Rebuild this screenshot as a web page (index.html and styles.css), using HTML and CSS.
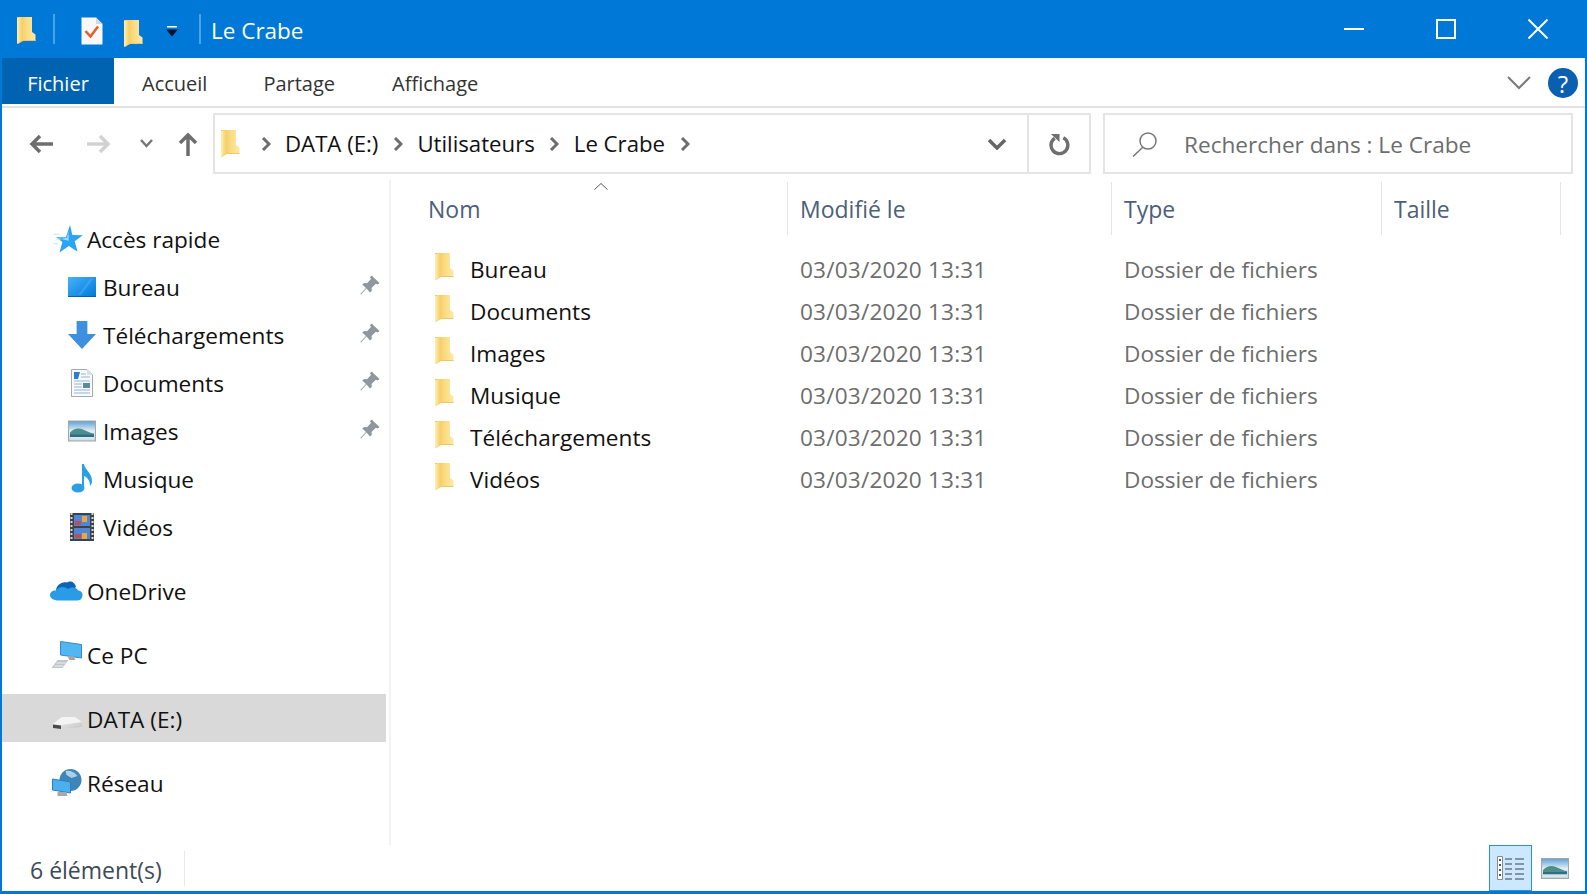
FILE: index.html
```html
<!DOCTYPE html>
<html lang="fr">

<head>
    <meta charset="UTF-8">
    <meta name="viewport" content="width=device-width, initial-scale=1.0">
    <title>Le Crabe</title>
    <link rel="stylesheet" href="styles.css">
</head>

<body>
    <svg class="defs" width="0" height="0">
        <defs>
            <linearGradient id="folderBack" x1="0" y1="0" x2="1" y2="0">
                <stop offset="0" stop-color="#f2c14e" />
                <stop offset="0.55" stop-color="#fbdc84" />
                <stop offset="1" stop-color="#fde9a6" />
            </linearGradient>
            <linearGradient id="folderFront" x1="0" y1="0" x2="1" y2="0">
                <stop offset="0" stop-color="#fff0b8" />
                <stop offset="1" stop-color="#f5cf6b" />
            </linearGradient>
            <linearGradient id="screenBlue" x1="0" y1="0" x2="1" y2="1">
                <stop offset="0" stop-color="#45b3fb" />
                <stop offset="1" stop-color="#0078d7" />
            </linearGradient>
            <linearGradient id="photoSky" x1="0" y1="0" x2="0" y2="1">
                <stop offset="0" stop-color="#5f9fd4" />
                <stop offset="0.5" stop-color="#dfeef6" />
                <stop offset="1" stop-color="#bcd7e2" />
            </linearGradient>
            <linearGradient id="driveTop" x1="0" y1="0" x2="1" y2="1">
                <stop offset="0" stop-color="#fafafa" />
                <stop offset="1" stop-color="#c4c4c4" />
            </linearGradient>
            <symbol id="folder" viewBox="0 0 19 27">
                <path fill="url(#folderBack)" d="M0 0H15V15L18.500 17.500V24H6L0.800 27L0 26Z" />
                <path fill="url(#folderFront)" d="M0 1L5 0V23.500L1 26.500H0Z" />
                <path fill="#f0c766" d="M6 23H18.500V24H6Z" />
            </symbol>
            <symbol id="pin" viewBox="0 0 20 20">
                <path fill="#8e979f" d="M11.500 0.500L19.500 8L17.500 9.500L15.800 8.800L11.500 13L11.800 16L10 17.500L6.500 13.500L1 19.500L0.300 19L6 13L2.300 9.500L4 8L7 8.300L11 4L10 2.300Z" />
            </symbol>
            <symbol id="photo" viewBox="0 0 28 21">
                <rect x="0.500" y="0.500" width="27" height="20" fill="url(#photoSky)" stroke="#a6a6a6" />
                <path fill="#4c8f8a" d="M2 12C6 8 10 7 15 9S23 13 26 13V15H2Z" />
                <path fill="#2f6c88" d="M2 14H26V16.500H2Z" />
                <path fill="#d6e6ee" d="M2 16.500H26V19H2Z" />
            </symbol>
        </defs>
    </svg>

    <div class="window">
        <header class="titlebar">
            <svg class="ico-folder"><use href="#folder" /></svg>
            <span class="title-sep first"></span>
            <svg class="ico-props" viewBox="0 0 22 28">
                <path fill="#f8f8f8" d="M0.500 0.500H15L21.500 7V27.500H0.500Z" />
                <path fill="#d8d8d8" d="M15 0.500V7H21.500Z" />
                <path fill="none" stroke="#e0622a" stroke-width="2.600" d="M4.500 14L9.500 19.500L17 9.500" />
            </svg>
            <svg class="ico-folder second"><use href="#folder" /></svg>
            <svg class="ico-drop" viewBox="0 0 12 11">
                <path fill="#fff" d="M1 0H11V1.500H1Z" />
                <path fill="#06122e" d="M0 3.500H12L6 10.500Z" />
            </svg>
            <span class="title-sep"></span>
            <span class="title-text">Le Crabe</span>
            <div class="win-controls">
                <svg class="win-btn" viewBox="0 0 20 20"><path d="M0 10H20" /></svg>
                <svg class="win-btn" viewBox="0 0 20 20"><path d="M1 1H19V19H1Z" /></svg>
                <svg class="win-btn" viewBox="0 0 20 20"><path d="M0.500 0.500L19.500 19.500M19.500 0.500L0.500 19.500" /></svg>
            </div>
        </header>

        <nav class="ribbon">
            <a class="tab tab-file">Fichier</a>
            <a class="tab tab-home">Accueil</a>
            <a class="tab tab-share">Partage</a>
            <a class="tab tab-view">Affichage</a>
            <svg class="ribbon-chevron" viewBox="0 0 24 14"><path d="M1 1L12 12L23 1" /></svg>
            <span class="help">?</span>
        </nav>

        <div class="toolbar">
            <div class="nav-buttons">
                <svg class="nav-arrow" viewBox="0 0 24 20"><path d="M24 10H4M11 2L3 10L11 18" /></svg>
                <svg class="nav-arrow disabled" viewBox="0 0 24 20"><path d="M0 10H20M13 2L21 10L13 18" /></svg>
                <svg class="nav-recent" viewBox="0 0 13 9"><path d="M1 1L6.500 7L12 1" /></svg>
                <svg class="nav-up" viewBox="0 0 20 24"><path d="M10 24V4M2 11L10 3L18 11" /></svg>
            </div>
            <div class="address">
                <svg class="ico-folder"><use href="#folder" /></svg>
                <svg class="crumb-arrow" viewBox="0 0 10 14"><path d="M2 1L8 7L2 13" /></svg>
                <span class="crumb">DATA (E:)</span>
                <svg class="crumb-arrow" viewBox="0 0 10 14"><path d="M2 1L8 7L2 13" /></svg>
                <span class="crumb">Utilisateurs</span>
                <svg class="crumb-arrow" viewBox="0 0 10 14"><path d="M2 1L8 7L2 13" /></svg>
                <span class="crumb">Le Crabe</span>
                <svg class="crumb-arrow" viewBox="0 0 10 14"><path d="M2 1L8 7L2 13" /></svg>
                <svg class="address-drop" viewBox="0 0 20 12"><path d="M2 2L10 10L18 2" /></svg>
                <div class="refresh">
                    <svg viewBox="0 0 22 26">
                        <path fill="none" stroke="#6f6f6f" stroke-width="3.600" d="M6 7.500A8.800 8.800 0 1 0 15 7" />
                        <path fill="#6f6f6f" d="M2 3H11V11.500Z" />
                    </svg>
                </div>
            </div>
            <div class="search">
                <svg class="search-icon" viewBox="0 0 26 26">
                    <circle cx="16" cy="10" r="8" />
                    <path d="M11 16L1 25.500" />
                </svg>
                <span class="search-text">Rechercher dans : Le Crabe</span>
            </div>
        </div>

        <div class="content">
            <aside class="sidebar">
                <div class="side-group">
                    <div class="side-item top">
                        <svg class="side-ico" viewBox="0 0 28 24">
                            <path fill="#2aa4f4" d="M17 0L19 8.500L28 8.800L21 14L23.500 23L16 18L8 23.500L10.500 14.500L5 10.500H13.500Z" />
                            <path fill="#9adcff" d="M15.500 5L14.500 11L9 12L16 13.500Z" />
                            <path fill="none" stroke="#cfe9fa" d="M3 8H8M5 12H9M3 16H7" />
                        </svg>
                        <span>Accès rapide</span>
                    </div>
                    <div class="side-item sub">
                        <svg class="side-ico" viewBox="0 0 28 20">
                            <rect width="28" height="20" fill="url(#screenBlue)" />
                            <path fill="#6cc5fa" d="M10 18L22 2H25L13 18Z" opacity="0.300" />
                            <path fill="#0e5ca8" d="M0 19H28V20H0Z" />
                        </svg>
                        <span>Bureau</span>
                        <svg class="pin"><use href="#pin" /></svg>
                    </div>
                    <div class="side-item sub">
                        <svg class="side-ico" viewBox="0 0 26 26">
                            <path fill="#3f8fe0" d="M8 0H18V12H26L13 26L0 12H8Z" />
                        </svg>
                        <span>Téléchargements</span>
                        <svg class="pin"><use href="#pin" /></svg>
                    </div>
                    <div class="side-item sub">
                        <svg class="side-ico" viewBox="0 0 28 28">
                            <path fill="#fbfbfb" stroke="#a8a8a8" d="M3.500 0.500H19L24.500 6V27.500H3.500Z" />
                            <path fill="#d4e2ee" d="M19 0.500V6H24.500Z" />
                            <path fill="#2a7fd0" d="M6 3H12L10 10H6Z" />
                            <path fill="none" stroke="#8fb5d8" stroke-width="1.200" d="M13 5H18M13 8H22M6 12H22M6 15H14M6 18H14M6 21H22M6 24H22" />
                            <path fill="#5c8aa0" d="M15 14H22V19H15Z" />
                        </svg>
                        <span>Documents</span>
                        <svg class="pin"><use href="#pin" /></svg>
                    </div>
                    <div class="side-item sub">
                        <svg class="side-ico"><use href="#photo" /></svg>
                        <span>Images</span>
                        <svg class="pin"><use href="#pin" /></svg>
                    </div>
                    <div class="side-item sub">
                        <svg class="side-ico" viewBox="0 0 28 28">
                            <ellipse cx="10" cy="23" rx="6.500" ry="4.500" fill="#2b9fe6" />
                            <path fill="#2b9fe6" d="M14 -1H16C17 5 24 8 24 16C24 18 23 20 22 21C22 15 19 12 16 11V23H14Z" />
                        </svg>
                        <span>Musique</span>
                    </div>
                    <div class="side-item sub">
                        <svg class="side-ico" viewBox="0 0 28 28">
                            <rect x="2" width="24" height="28" fill="#3d4247" />
                            <rect x="6" y="2" width="16" height="11" fill="#4f86d8" />
                            <rect x="6" y="15" width="16" height="11" fill="#4f86d8" />
                            <path fill="#e8a83a" d="M14 3H19V9H14ZM14 20H19V26H14Z" />
                            <path fill="#c84a4a" d="M7 8H13V12H7ZM7 21H13V25H7Z" />
                            <path fill="none" stroke="#d8d8d8" stroke-width="2" stroke-dasharray="2 2" d="M3.500 0V28M24.500 0V28" />
                        </svg>
                        <span>Vidéos</span>
                    </div>
                </div>
                <div class="side-group">
                    <div class="side-item top">
                        <svg class="side-ico" viewBox="0 0 33 22">
                            <path fill="#0a64b8" d="M6 11C6 5 12 1 17 2.500C20 0 25 2 26 7L14 17H5Z" />
                            <path fill="#2a9be6" d="M9 20.500C3 20.500 0 18 0 15C0 12 3 10 6 10.500C9 6 15 6 18 9C22 6.500 27 7.500 28 10.500C31 10.500 33 13 32.500 16C32 19 30 20.500 27 20.500Z" />
                        </svg>
                        <span>OneDrive</span>
                    </div>
                </div>
                <div class="side-group">
                    <div class="side-item top">
                        <svg class="side-ico" viewBox="0 0 32 28">
                            <path fill="#52b6f2" stroke="#3a8ac8" d="M10 0.500L31 3.500V17L10 14Z" />
                            <path fill="#a5a5a5" d="M17 15H23L25 19H19Z" />
                            <path fill="#c2c6ca" d="M7 19H18L12 27H1Z" />
                            <path fill="none" stroke="#eeeeee" d="M6 22H15M4 25H13" />
                        </svg>
                        <span>Ce PC</span>
                    </div>
                </div>
                <div class="side-group">
                    <div class="side-item top selected">
                        <svg class="side-ico" viewBox="0 0 33 28">
                            <path fill="url(#driveTop)" d="M3 19L12 12H25L32 17V22L10 24L3 23Z" />
                            <path fill="#f4f4f4" d="M3 19L12 12H25L32 17L11 20Z" />
                            <path fill="#4a4a4a" d="M3 19.500L11 20.500V24L3 23Z" />
                        </svg>
                        <span>DATA (E:)</span>
                    </div>
                </div>
                <div class="side-group">
                    <div class="side-item top">
                        <svg class="side-ico" viewBox="0 0 30 28">
                            <circle cx="19" cy="11" r="11" fill="#3f86b8" />
                            <path fill="#a8d0ea" d="M14 2C19 1 23 3 26 7L20 9L15 6Z" />
                            <path fill="#4cb0ee" stroke="#2a7fc4" d="M1 10L19 13V24L1 21Z" />
                            <path fill="#a8a8a8" d="M6 23H15L16 27H6Z" />
                        </svg>
                        <span>Réseau</span>
                    </div>
                </div>
            </aside>

            <main class="files">
                <svg class="sort-mark" viewBox="0 0 14 7"><path d="M0.500 6.500L7 0.500L13.500 6.500" /></svg>
                <div class="file-head">
                    <div class="col col-name">Nom</div>
                    <div class="col">Modifié le</div>
                    <div class="col">Type</div>
                    <div class="col">Taille</div>
                </div>
                <div class="file-row">
                    <div class="file-name"><svg class="ico-folder"><use href="#folder" /></svg>Bureau</div>
                    <div class="file-date">03/03/2020 13:31</div>
                    <div>Dossier de fichiers</div>
                </div>
                <div class="file-row">
                    <div class="file-name"><svg class="ico-folder"><use href="#folder" /></svg>Documents</div>
                    <div class="file-date">03/03/2020 13:31</div>
                    <div>Dossier de fichiers</div>
                </div>
                <div class="file-row">
                    <div class="file-name"><svg class="ico-folder"><use href="#folder" /></svg>Images</div>
                    <div class="file-date">03/03/2020 13:31</div>
                    <div>Dossier de fichiers</div>
                </div>
                <div class="file-row">
                    <div class="file-name"><svg class="ico-folder"><use href="#folder" /></svg>Musique</div>
                    <div class="file-date">03/03/2020 13:31</div>
                    <div>Dossier de fichiers</div>
                </div>
                <div class="file-row">
                    <div class="file-name"><svg class="ico-folder"><use href="#folder" /></svg>Téléchargements</div>
                    <div class="file-date">03/03/2020 13:31</div>
                    <div>Dossier de fichiers</div>
                </div>
                <div class="file-row">
                    <div class="file-name"><svg class="ico-folder"><use href="#folder" /></svg>Vidéos</div>
                    <div class="file-date">03/03/2020 13:31</div>
                    <div>Dossier de fichiers</div>
                </div>
            </main>
        </div>

        <footer class="status">
            <span class="status-count">6 élément(s)</span>
            <div class="view-btn active">
                <svg viewBox="0 0 28 24">
                    <path fill="#fff" stroke="#8a8a8a" d="M0.500 0.500H5.500V23.500H0.500Z" />
                    <path fill="#555" d="M2 3H4V5H2ZM2 8H4V10H2ZM2 18H4V20H2ZM2 13H4V15H2Z" />
                    <path fill="none" stroke="#6a7a88" stroke-width="1.300" d="M8 3H15M18 3H27M8 8H15M18 8H27M8 13H15M18 13H27M8 18H15M18 18H27M8 23H15M18 23H27" />
                </svg>
            </div>
            <svg class="view-thumb"><use href="#photo" /></svg>
        </footer>
    </div>
</body>

</html>
```

FILE: styles.css
```css
* {
    box-sizing: border-box;
}

html,
body {
    height: 100%;
}

body {
    margin: 0;
    font-family: "Open Sans", "Noto Sans", sans-serif;
    font-size: 22.600px;
    color: #111;
    background-color: #fff;
    overflow: hidden;
}

svg {
    display: block;
    flex: none;
}

.defs {
    position: absolute;
}

.window {
    height: 100%;
    display: flex;
    flex-direction: column;
    border-left: 2px solid #0078d7;
    border-right: 2px solid #0078d7;
    border-bottom: 3px solid #0078d7;
}

.ico-folder {
    width: 19px;
    height: 27px;
}

/* title bar */
.titlebar {
    height: 58px;
    margin: 0 -2px;
    padding-left: 17px;
    display: flex;
    align-items: center;
    background-color: #0078d7;
    color: #fff;
}

.titlebar .ico-folder {
    margin-top: 2px;
}

.titlebar .ico-folder.second {
    margin: 8px 23px 0 21px;
}

.title-sep {
    width: 2px;
    height: 30px;
    margin: 0 10px 0 0;
    background-color: #4aa3e6;
}

.title-sep.first {
    margin: 0 26px 0 17px;
}

.ico-props {
    width: 22px;
    height: 28px;
    margin-top: 4px;
}

.ico-drop {
    width: 12px;
    height: 11px;
    margin: 4px 21px 0 0;
}

.title-text {
    font-size: 22.500px;
    padding-top: 2px;
}

.win-controls {
    margin-left: auto;
    display: flex;
    align-items: center;
    gap: 72px;
    padding-right: 39px;
}

.win-btn {
    width: 20px;
    height: 20px;
    fill: none;
    stroke: #fff;
    stroke-width: 2;
}

/* ribbon */
.ribbon {
    height: 50px;
    display: flex;
    align-items: flex-start;
    border-bottom: 2px solid #e2e2e2;
    font-size: 20px;
    color: #333;
}

.tab {
    height: 46px;
    padding-top: 4px;
    display: flex;
    align-items: center;
}

.tab-file {
    width: 112px;
    justify-content: center;
    background-color: #0063b1;
    color: #fff;
}

.tab-home {
    margin-left: 28px;
}

.tab-share {
    margin-left: 56px;
}

.tab-view {
    margin-left: 57px;
}

.ribbon-chevron {
    width: 24px;
    height: 14px;
    margin: 18px 17px 0 auto;
    fill: none;
    stroke: #7a7a7a;
    stroke-width: 2;
}

.help {
    width: 30px;
    height: 30px;
    margin: 10px 7px 0 0;
    border-radius: 50%;
    display: flex;
    align-items: center;
    justify-content: center;
    background-color: #0a5fb0;
    color: #fff;
    font-size: 24px;
}

/* toolbar */
.toolbar {
    height: 72px;
    padding: 5px 12px 6px 0;
    display: flex;
}

.nav-buttons {
    width: 211px;
    flex: none;
    display: flex;
    align-items: center;
    padding-left: 27px;
    color: #777;
}

.nav-arrow {
    width: 24px;
    height: 20px;
    fill: none;
    stroke: #6e6e6e;
    stroke-width: 3.500;
    margin-right: 34px;
}

.nav-arrow.disabled {
    stroke: #d2d2d2;
    margin-right: 29px;
}

.nav-recent {
    width: 13px;
    height: 9px;
    fill: none;
    stroke: #777;
    stroke-width: 2.500;
    margin-right: 25px;
}

.nav-up {
    width: 20px;
    height: 24px;
    fill: none;
    stroke: #6e6e6e;
    stroke-width: 3.500;
}

.address {
    flex: 1;
    display: flex;
    align-items: center;
    border: 2px solid #e4e4e4;
    padding-left: 6px;
    font-size: 22.200px;
    color: #111;
}

.crumb-arrow {
    width: 10px;
    height: 14px;
    margin: 0 14px 0 21px;
    fill: none;
    stroke: #6e6e6e;
    stroke-width: 3;
}

.crumb + .crumb-arrow {
    margin: 0 14.500px;
}

.address-drop {
    width: 20px;
    height: 12px;
    margin-left: auto;
    fill: none;
    stroke: #666;
    stroke-width: 3.500;
}

.refresh {
    width: 62px;
    height: 100%;
    margin-left: 20px;
    border-left: 2px solid #e4e4e4;
    display: flex;
    align-items: center;
    justify-content: center;
}

.refresh svg {
    width: 21px;
    height: 25px;
}

.search {
    width: 470px;
    margin-left: 12px;
    flex: none;
    display: flex;
    align-items: center;
    border: 2px solid #e4e4e4;
    padding-left: 27px;
    color: #6d6d6d;
}

.search-icon {
    width: 26px;
    height: 26px;
    margin-right: 26px;
    fill: none;
    stroke: #777;
    stroke-width: 1.500;
}

.search-text {
    padding-top: 2px;
}

/* main area */
.content {
    flex: 1;
    min-height: 0;
    display: flex;
}

.sidebar {
    width: 389px;
    flex: none;
    padding: 35px 3px 0 0;
    border-right: 2px solid #f3f3f3;
}

.side-group {
    margin-bottom: 16px;
}

.side-item {
    height: 48px;
    display: flex;
    align-items: center;
}

.side-item.top {
    padding-left: 48px;
}

.side-item.top .side-ico {
    width: 33px;
    height: 28px;
    margin-right: 4px;
}

.side-item.sub {
    padding-left: 66px;
}

.side-item.sub .side-ico {
    width: 28px;
    height: 28px;
    margin-right: 7px;
    overflow: visible;
}

.side-item.selected {
    margin: -1px 0 17px;
    padding-top: 2px;
    background-color: #d9d9d9;
}

.pin {
    width: 20px;
    height: 20px;
    margin: -4px 6px 0 auto;
}

.files {
    position: relative;
    flex: 1;
    min-width: 0;
}

.sort-mark {
    position: absolute;
    left: 203px;
    top: 3px;
    width: 14px;
    height: 7px;
    fill: none;
    stroke: #555;
}

.file-head,
.file-row {
    display: grid;
    grid-template-columns: 397px 324px 270px 179px;
}

.file-head {
    height: 53px;
    margin: 2px 0 13px;
    font-size: 23px;
    color: #4c607a;
}

.col {
    display: flex;
    align-items: center;
    padding-left: 12px;
    border-right: 1px solid #e5e5e5;
}

.col-name {
    padding-left: 37px;
}

.file-row {
    height: 42px;
    align-items: center;
    color: #6d6d6d;
}

.file-row > div {
    padding-left: 12px;
}

.file-row > .file-name {
    padding-left: 44px;
    display: flex;
    align-items: center;
    gap: 16px;
    color: #111;
}

.file-row > .file-date {
    letter-spacing: 0.200px;
}

.file-name .ico-folder {
    margin-top: -5px;
}

/* status bar */
.status {
    height: 46px;
    flex: none;
    display: flex;
    align-items: center;
    padding-right: 16px;
    font-size: 23px;
    color: #3d4a58;
}

.status-count {
    margin-left: 28px;
    padding: 3px 22px 0 0;
    border-right: 1px solid #e8e8e8;
    margin-right: auto;
}

.view-btn {
    width: 43px;
    height: 46px;
    display: flex;
    align-items: center;
    justify-content: center;
    margin-right: 9px;
    border: 1px solid #2f8fd0;
    background-color: #cce8ff;
}

.view-btn svg {
    width: 28px;
    height: 24px;
}

.view-thumb {
    width: 28px;
    height: 21px;
}
```
